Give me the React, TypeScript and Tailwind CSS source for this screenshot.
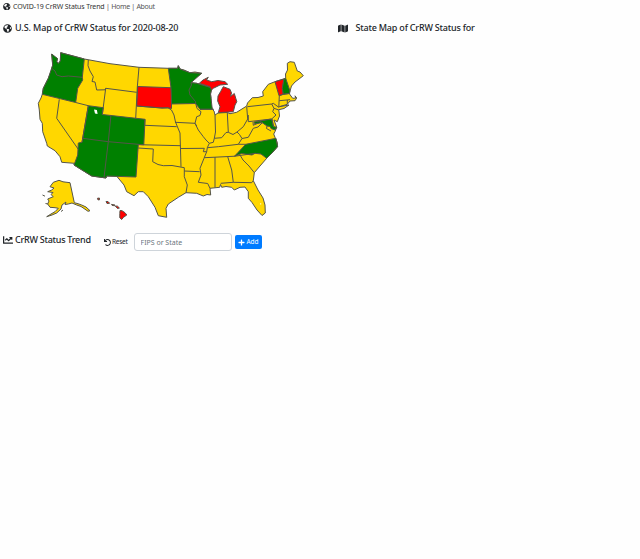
import React from "react";
import { FaGlobeAmericas, FaMap, FaChartLine, FaUndo, FaPlus } from "react-icons/fa";

const GOLD = "#ffd700";
const GREEN = "#008000";
const RED = "#ff0000";

const country =
  "M51.7 54L54.5 57L57.5 58.5L56.8 61.5L58.3 63.5L60.3 61L60.7 52.7L84.3 59L110 63.7L139 67.3L168.3 68.3L177.7 68.3L178.3 65.7L180 69L184 70L190 72.7L195 72L201.7 73.3L196 77L191 82.7L196.7 83.3L210 87.3L211.7 88.3L210.5 94L211 98.3L210.5 104L212.3 109.3L214 111L215 115L218 113L227.3 112.5L230 113.7L236.7 112.3L246.7 106L247.5 103L252.3 97.7L258 97.5L263.3 96L262.7 91.7L268.3 84.3L275 81.7L285.7 78.3L285.5 74L287.5 70L287.3 63.3L290 61.7L294.3 62.3L297.3 71L300 72L303.3 75.7L299 79L295 82L291.5 86L290 91L289.5 94L292.7 98.3L295.8 98L295 95.8L296.7 98L295 100.7L290 101L287.3 104.3L279.3 106.7L289 105L284 108.5L278.8 109.7L279.5 116L277.3 121.7L274 120L275.5 124L276.7 127.3L275 131.7L273.7 134L275 137.3L277.3 142.5L277.5 146.7L272 153L266.7 158.3L260 166L254.3 172.7L253.3 180.7L258 190L263 198L265 205L265.3 213L262 215.5L257 210L252 202.5L248.3 198.3L248.3 191.7L245 187L240 187.3L234.3 190L231.7 187.3L226 186.5L221.7 187.3L220.5 184.5L219.7 187.3L210 188.3L210.7 195L207 194.5L203.3 196L196.7 193.3L186 192.7L178.3 197.3L168.3 204L166 208.3L166.7 217.3L158.3 215.7L155 207.3L148.3 196.7L143.3 191.7L138.3 191.7L134 195.7L126.7 191.7L124 185L116.7 176.2L106.7 176L106 178L91.7 176L74 165L74.3 163.3L61.7 162.3L60 156.7L55 150.7L47.3 146L46.7 143.3L42.7 131.7L42.3 123.3L40 119.3L39.3 110L38.3 103.3L41 98L42.3 94.3L43.3 88.3L48.3 78.3L51.7 70L52.7 65Z";

const filled: [string, string][] = [
  ["M51.7 54L57.5 58.5L56.8 61.5L58.3 63.5L60.3 61L60.7 52.7L84.3 59L82.3 77.3L82.7 80L77.7 88.3L75.7 102.5L42.3 94.3L43.3 88.3L48.3 78.3L52.7 65Z", GREEN],
  ["M88.3 105.7L103.3 107.7L102.3 114.5L145 119.3L143.8 144.8L138.3 144.7L136 177L106.7 176L106 178L91.7 176L74 165L77.7 155L78.3 143L82 142.3Z", GREEN],
  ["M137.7 86.5L171 87.7L171.5 91L171.5 108.5L168 107.8L162 108L136.7 106Z", RED],
  ["M168.3 68.3L177.7 68.3L178.3 65.7L180 69L190 72.7L201.7 73.3L191 82.7L196.7 83.3L210 87.3L211.7 88.3L210.5 94L211 98.3L212.3 109.3L200 109.3L195.7 103.5L171.5 104L171 87.7Z", GREEN],
  ["M199.3 83.3L203 80L208.3 77.3L206.5 80L211.7 81.7L218 80.5L225 81.7L227.7 84.3L220 85L213.3 88.3L211.5 90L210 86.7Z", RED],
  ["M223.3 86.7L230 89.3L231.5 93L230.5 96.5L234.3 93.5L236.8 101.7L235 105L233.3 111.7L218.3 112.7L220 106.7L217.7 101L218 96L220.5 91.7Z", RED],
  ["M275 81.7L284 79L282.3 88.3L283.3 94.3L279 95.7Z", RED],
  ["M284 79L285.7 78.3L290 91L289 93.5L283.3 94.3L282.3 88.3Z", GREEN],
  ["M254 122L271.7 119L273.5 126.5L276.7 127.3L275 130L271 128.5L270 126.5L267 126L262 122.5L255 124Z", GREEN],
  ["M245.7 144.3L276 138.3L277.5 146.7L271.7 153.3L266.7 158.3L261 154L255 153.3L252 155L241.7 153.5L234.5 156.2L238 152.5Z", GREEN],
];

const borders = [
  "M51.7 68.3L55 71L56.7 75L62 76.7L68.3 76L82.3 77.3",
  "M88.3 60L88 65.7L90 71L93.3 76.7L92 81.5L95 82L96.7 90L105 89.8L105.7 88.3",
  "M59.3 99.3L56.7 118.3L78.3 149.3M75.7 102.5L88.3 105.7L82 142.3",
  "M105.7 88.3L102.3 114.5M105.7 88.3L136.7 92.3M139 67.3L137.3 87L135.7 118.3",
  "M110.9 115.7L108.3 141.7L104 177.5M82.5 138.3L108.3 141.7L143.8 144.8L180.5 145.7",
  "M145 119.3L144.7 125.3L176.7 126.7M136.7 106L162 108L168 107.8L171.5 110L174 115L175.5 122L177.5 127L180 133L181 166.7",
  "M138.3 148L153.3 149L152.7 161.7L158 164.5L163.3 165.7L172 165.5L184.3 167.7L184.3 176.7L187.3 185L186 192.7",
  "M175 122.3L195 123.3L196.7 126M195.7 103.5L197 108.5L201 111.7L200 115.5L196.7 116.7L195 123.3L198.3 130L203.3 136.7L206 140L209.3 143.3L207.3 147.7L206.7 151.7L204 158.3L200 168.3L201 175L198.3 182.3L207.7 183.5L210 188.3",
  "M191 82.7L191.5 85L189 90L190 95L195.5 101.5L195.7 103.5M200 109.3L214 109.3M215 115L215.5 132L214.3 138.3L213.3 142.3L209.3 143.3",
  "M181 148.5L204.3 148.3L203.3 151.7L206.7 151.7M184.3 171L199.7 171.7M204.3 157.7L215 157.2L235 156.2L255 153.3",
  "M207.3 147.7L218.3 146.7L238.3 144.3L245.7 144.3M227.3 112.7L228.3 132.3M214.3 138.3L221.7 137.7L226 132.5L228.3 132.3L233 134.5L237 132L239.5 134.5L242 138.5L238.3 144.3M237 132L243.3 126.7L247.7 119L246.7 106.7",
  "M242 138.5L248.3 137.3L253.3 128.3L258 127L262.3 122.7L260 121.5M248.3 115L248.3 121.7L271.7 119L276 115L272.7 111.7L274 108.3L271.7 104L247.3 106.7",
  "M271.7 104L273.3 103.3L278.8 107.3L279.3 95.7M274 108.3L278.8 110M279 95.7L283.3 94.3L289 93.5M279.3 100.7L290 99.7M287.3 100V104.3M253 122L253.3 125.3L258 123M267 126L266.5 128.5L271 131M272 119L273.5 126.5",
  "M215 157.2L215 187.5M227.7 156.7L231.7 170L233.3 182.3L220.7 183.3M233.3 182.3L251.7 182.7L253.3 180.7M240 155L243 160L249 166L254.3 172.7",
];

const islands: [string, string][] = [
  ["M50 186.7L53.3 182.3L59 180.3L63 181.8L70 182.7L74.3 202.7L78 203.7L81.7 205L86 207L90 210.7L88 211.3L84 208.5L81 206.5L76.7 205L72 203L68.3 204L65 204.5L66 202L62 205L61 209L56.7 213L52 215L46.7 216.7L51 214L55 211.7L58.3 208.3L55 207.7L50 207.3L47.7 204L49 201L47.7 199L53.3 196.7L51 194.5L53 192.5L47.7 191.7L51.7 190L54 188Z", GOLD],
  ["M42.5 195L45 196.2M45.5 203.5L48 204M61 211.5L63 210", GOLD],
  ["M97.4 198.3L99.4 198L99.5 199.8L98 199.9Z", RED],
  ["M106 201.5L108 201.5L109.6 203.3L107 203.5Z", RED],
  ["M111.5 204.4L115 205L114.5 205.8L112 205.3Z", RED],
  ["M115.3 206L117.5 206.2L119.4 208L117.5 208.5Z", RED],
  ["M120 210.5L122 210.7L125 212.7L126.8 215L123.5 217.3L121.7 219.5L119.8 217.8L119.8 213.5Z", RED],
];

function StatusMap() {
  return (
    <svg
      className="h-[188px] w-[320px] shrink-0"
      viewBox="0 40 320 188"
      fill="none"
      stroke="#55554a"
      strokeWidth="1"
      strokeLinejoin="round"
    >
      <path d={country} fill={GOLD} />
      {filled.map(([d, fill]) => (
        <path key={d} d={d} fill={fill} />
      ))}
      {borders.map((d) => (
        <path key={d} d={d} />
      ))}
      {islands.map(([d, fill]) => (
        <path key={d} d={d} fill={fill} />
      ))}
      <path d="M94 109.5L96.9 110L97.6 113.9L95 113.5Z" fill="#fff" stroke="none" />
      <path d="M260 203.2h1.2v1.2h-1.2z" fill="#fff8c8" stroke="none" />
    </svg>
  );
}

export default function App() {
  return (
    <div className="h-[559px] w-[640px] overflow-hidden bg-[#fefefe] font-['Noto_Sans','Open_Sans',sans-serif] text-[#212529]">
      <nav className="flex h-[13px] items-center pl-[3px] text-[7px] leading-[13px] whitespace-pre">
        <FaGlobeAmericas className="mr-[2.5px] size-[7.5px]" />
        <span className="tracking-[-0.12px] text-[#333]">COVID-19 CrRW Status Trend</span>
        <span className="tracking-[-0.3px] text-[#555]"> | Home | About</span>
      </nav>
      <div className="flex h-[27px] items-center pt-[3px] text-[9px] font-medium whitespace-nowrap">
        <h2 className="flex w-[335px] items-center pl-[3px]">
          <FaGlobeAmericas className="mr-[3px] size-[9px]" />
          <span className="tracking-[-0.13px]">U.S. Map of CrRW Status for 2020-08-20</span>
        </h2>
        <h2 className="flex items-center pl-[3px]">
          <FaMap className="mr-[7.5px] h-[9px] w-[10px]" />
          <span className="tracking-[-0.2px]">State Map of CrRW Status for</span>
        </h2>
      </div>
      <StatusMap />
      <div className="flex h-[28px] items-center pl-[3px] whitespace-nowrap">
        <h2 className="flex w-[101px] items-center pb-[5px] text-[9px] font-medium">
          <FaChartLine className="mr-[2px] size-[10px]" />
          <span className="tracking-[-0.25px]">CrRW Status Trend</span>
        </h2>
        <button className="flex w-[30px] items-center text-[6.5px] tracking-[-0.25px]">
          <FaUndo className="mr-[1px] size-[7px]" />
          Reset
        </button>
        <input
          className="h-[18px] w-[98px] rounded-[3px] border border-[#ced4da] bg-white px-[5.5px] pt-[1px] text-[7px] placeholder:text-[#6c757d]"
          placeholder="FIPS or State"
        />
        <button className="ml-[3px] flex h-[14px] w-[27px] items-center justify-center rounded-[2px] bg-[#007bff] text-[6.5px] text-white">
          <FaPlus className="mr-[1px] size-[7px]" />
          Add
        </button>
      </div>
    </div>
  );
}
